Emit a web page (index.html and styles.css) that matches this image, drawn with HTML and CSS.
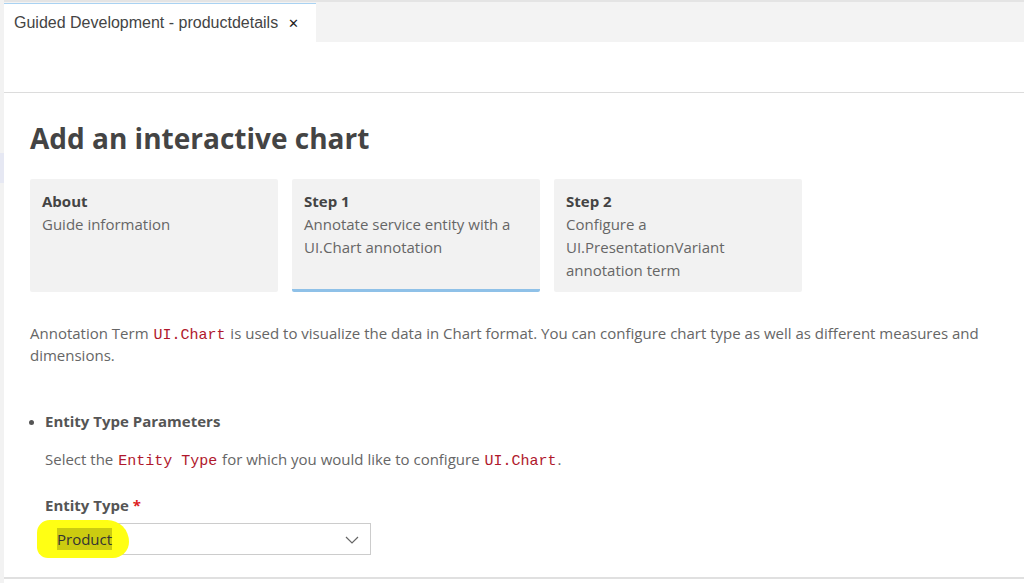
FILE: index.html
```html
<!DOCTYPE html>
<html lang="en">
<head>
    <meta charset="UTF-8">
    <meta name="viewport" content="width=device-width, initial-scale=1.0">
    <title>Guided Development</title>
    <link rel="stylesheet" href="styles.css">
</head>
<body>
    <div class="rail">
        <div class="rail-mark"></div>
    </div>

    <div class="main">
        <div class="tabbar">
            <div class="tab">
                <span class="tab-title">Guided Development - productdetails</span>
                <span class="tab-close">&#x2715;</span>
            </div>
        </div>
        <div class="toolbar"></div>

        <div class="page">
            <h1>Add an interactive chart</h1>

            <div class="steps">
                <div class="step">
                    <div class="step-title">About</div>
                    <div class="step-text">Guide information</div>
                </div>
                <div class="step active">
                    <div class="step-title">Step 1</div>
                    <div class="step-text">Annotate service entity with a UI.Chart annotation</div>
                </div>
                <div class="step">
                    <div class="step-title">Step 2</div>
                    <div class="step-text">Configure a UI.PresentationVariant annotation term</div>
                </div>
            </div>

            <p class="intro">Annotation Term <code>UI.Chart</code> is used to visualize the data in Chart format. You can configure chart type as well as different measures and dimensions.</p>

            <ul class="params">
                <li>
                    <div class="param-title">Entity Type Parameters</div>
                    <p class="param-text">Select the <code>Entity Type</code> for which you would like to configure <code>UI.Chart</code>.</p>

                    <label class="field-label" for="entity">Entity Type <span class="req">*</span></label>
                    <div class="select" id="entity">
                        <span class="marker"></span>
                        <span class="select-value">Product</span>
                        <svg class="chevron" width="14" height="8" viewBox="0 0 14 8">
                            <path d="M1 1l6 6 6-6" fill="none" stroke="#666" stroke-width="1.2"/>
                        </svg>
                    </div>
                </li>
            </ul>
        </div>
        <div class="footer-line"></div>
    </div>
</body>
</html>
```

FILE: styles.css
```css
body {
    margin: 0;
    display: flex;
    height: 583px;
    overflow: hidden;
    background-color: #fff;
    font-family: "Open Sans", "Noto Sans", sans-serif;
    color: #555;
}

.rail {
    width: 4px;
    flex-shrink: 0;
    background-color: #f2f2f2;
}

.rail-mark {
    margin-top: 153px;
    height: 30px;
    background-color: #e6e8f3;
}

.main {
    flex: 1;
    display: flex;
    flex-direction: column;
}

.tabbar {
    height: 40px;
    border-top: 2px solid #e4e4e4;
    background-color: #f3f3f3;
    display: flex;
}

.tab {
    width: 312px;
    margin-top: 1px;
    background-color: #fff;
    border-top: 1px solid #a9d2f2;
    display: flex;
    align-items: center;
    padding-left: 10px;
    box-sizing: border-box;
    font-family: "Liberation Sans", Arial, sans-serif;
    font-size: 16px;
    color: #444;
}

.tab-close {
    margin-left: 10px;
    font-size: 13px;
    color: #222;
}

.toolbar {
    height: 50px;
    border-bottom: 1px solid #dcdcdc;
}

.page {
    flex: 1;
    padding: 0 0 0 26px;
}

h1 {
    margin: 21px 0 0;
    font-size: 28px;
    font-weight: 700;
    color: #444;
    line-height: 48px;
}

.steps {
    display: flex;
    gap: 14px;
    margin-top: 17px;
}

.step {
    width: 248px;
    height: 113px;
    box-sizing: border-box;
    padding: 11px 12px;
    background-color: #f2f2f2;
    border-radius: 2px;
    font-size: 15px;
    line-height: 23px;
}

.step.active {
    border-bottom: 3px solid #8fc1e8;
}

.step-title {
    font-weight: 700;
    color: #444;
}

.step-text {
    color: #666;
}

code {
    font-family: "Liberation Mono", "DejaVu Sans Mono", monospace;
    font-size: 15px;
    line-height: 1;
    padding: 0 1px;
    color: #b0182c;
}

.intro {
    margin: 30px 0 0;
    font-size: 15px;
    line-height: 22px;
    color: #666;
    padding-right: 10px;
}

.params {
    margin: 44px 0 0;
    padding-left: 15px;
    list-style: disc;
}

.params li::marker {
    font-size: 13px;
}

.param-title {
    font-size: 15px;
    font-weight: 700;
    color: #555;
    line-height: 22px;
}

.param-text {
    margin: 16px 0 0;
    font-size: 15px;
    line-height: 22px;
    color: #666;
}

.field-label {
    display: block;
    margin-top: 24px;
    font-size: 15px;
    font-weight: 700;
    color: #555;
    line-height: 22px;
}

.req {
    color: #d22;
}

.select {
    position: relative;
    margin-top: 7px;
    width: 326px;
    height: 32px;
    box-sizing: border-box;
    border: 1px solid #ccc;
    display: flex;
    align-items: center;
    padding: 0 11px;
    justify-content: space-between;
}

.marker {
    position: absolute;
    left: -9px;
    top: -4px;
    width: 92px;
    height: 38px;
    background-color: #ffff14;
    border-radius: 14px 24px 18px 12px;
}

.select-value {
    position: relative;
    font-size: 15px;
    color: #333;
    background-color: #cccc10;
    line-height: 22px;
}

.chevron {
    margin-top: 2px;
}

.footer-line {
    height: 4px;
    border-top: 2px solid #e0e0e0;
}
```
